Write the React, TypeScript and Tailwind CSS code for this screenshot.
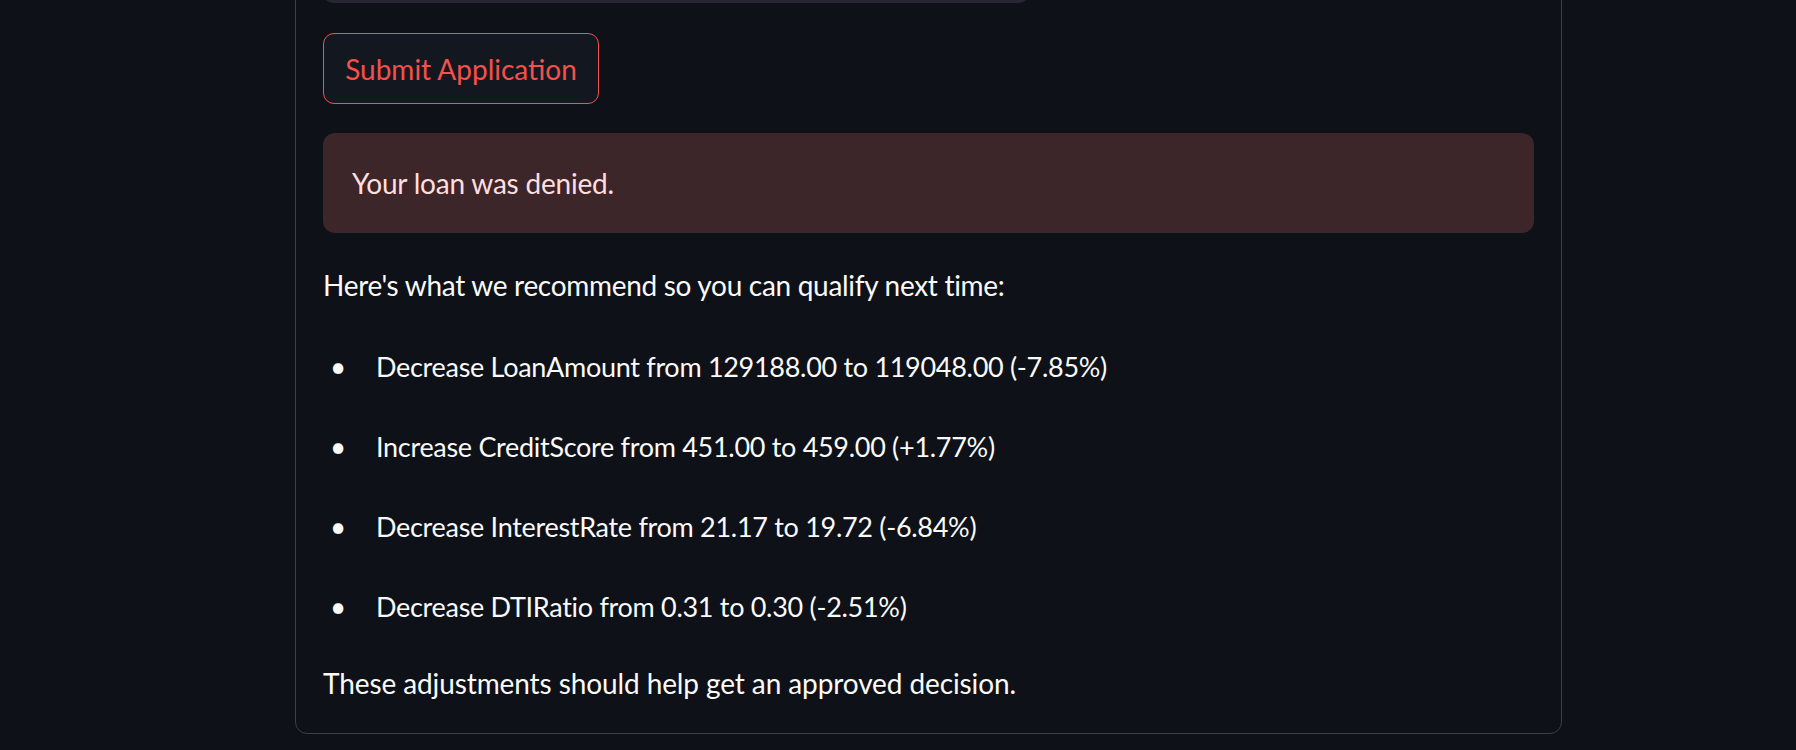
import React from "react";

const recommendations = [
  "Decrease LoanAmount from 129188.00 to 119048.00 (-7.85%)",
  "Increase CreditScore from 451.00 to 459.00 (+1.77%)",
  "Decrease InterestRate from 21.17 to 19.72 (-6.84%)",
  "Decrease DTIRatio from 0.31 to 0.30 (-2.51%)",
];

export default function App() {
  return (
    <div
      className="h-[750px] w-full overflow-hidden bg-[#0e1117] text-[#fafafa]"
      style={{ fontFamily: "Lato, 'Liberation Sans', sans-serif" }}
    >
      <div className="ml-[295px] mt-[-80px] w-[1267px] rounded-[12px] border border-[#3d3f46] px-[27px] pt-[22px] pb-[27px]">
        {/* previous form field, cut off by the viewport */}
        <div className="h-[60px] w-[706px] rounded-[10px] bg-[#262730]" />

        <button
          type="button"
          className="mt-[30px] flex h-[71px] w-[276px] items-center justify-center rounded-[11px] border border-[#f5504a] bg-[#131720] text-[28px] text-[#f5504a]"
        >
          Submit Application
        </button>

        <div className="mt-[29px] flex h-[100px] items-center rounded-[12px] bg-[#3d2629] pl-[29px] text-[28px] tracking-[-0.2px] text-[#ffdede]">
          Your loan was denied.
        </div>

        <div className="mt-[30px] text-[28px] leading-[45px]">
          <p className="tracking-[-0.3px]">Here's what we recommend so you can qualify next time:</p>
          <ul className="mt-[36px] flex flex-col gap-[35px]">
            {recommendations.map((item) => (
              <li key={item} className="flex">
                <span className="w-[53px] pl-[7px]">•</span>
                <span className="text-[27px] tracking-[-0.3px]">{item}</span>
              </li>
            ))}
          </ul>
          <p className="mt-[32px] tracking-[-0.1px]">
            These adjustments should help get an approved decision.
          </p>
        </div>
      </div>
    </div>
  );
}
